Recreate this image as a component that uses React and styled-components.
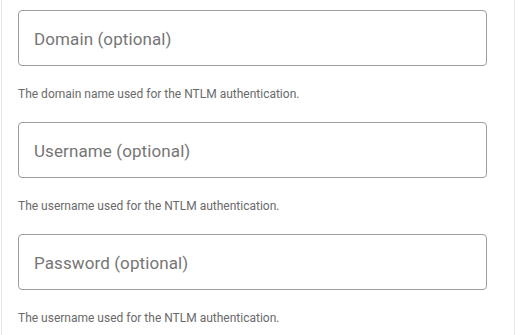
import React from 'react'
import styled, {createGlobalStyle} from 'styled-components'

const GlobalStyle = createGlobalStyle`
  html, body {
    margin: 0;
    padding: 0;
    background: #ffffff;
  }
  body {
    font-family: Roboto, "Liberation Sans", Arial, sans-serif;
  }
`

const fields = [
  {placeholder: 'Domain (optional)', help: 'The domain name used for the NTLM authentication.'},
  {placeholder: 'Username (optional)', help: 'The username used for the NTLM authentication.'},
  {placeholder: 'Password (optional)', help: 'The username used for the NTLM authentication.', type: 'password'},
]

const App = () => {
  return (
    <>
      <GlobalStyle />
      <Panel>
        {fields.map((f) => (
          <Field key={f.placeholder}>
            <Input type={f.type || 'text'} placeholder={f.placeholder} />
            <Help>{f.help}</Help>
          </Field>
        ))}
      </Panel>
    </>
  )
}

export default App

const Panel = styled.div`
  box-sizing: border-box;
  margin-left: 1px;
  width: 514px;
  height: 335px;
  border-left: 1px solid #e6e6e6;
  border-right: 1px solid #e6e6e6;
  padding: 10px 27px 0 16px;
  display: flex;
  flex-direction: column;
  gap: 20px;
  overflow: hidden;
`

const Field = styled.div`
  display: flex;
  flex-direction: column;
`

const Input = styled.input`
  box-sizing: border-box;
  width: 100%;
  height: 56px;
  padding: 1px 15px 0;
  border: 1px solid #9e9e9e;
  border-radius: 4px;
  font-family: Roboto, "Liberation Sans", Arial, sans-serif;
  font-size: 17px;
  letter-spacing: 0.1px;
  color: #333;
  outline: none;
  background: #fff;

  &::placeholder {
    color: #767676;
    opacity: 1;
  }
`

const Help = styled.div`
  margin-top: 20px;
  font-size: 12px;
  line-height: 16px;
  color: #6a6a6a;
`
